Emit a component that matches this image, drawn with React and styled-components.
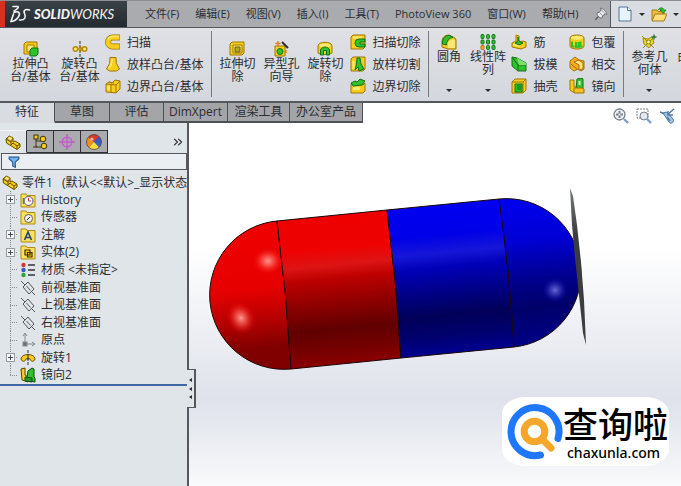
import React from 'react';
import styled, { createGlobalStyle } from 'styled-components';
import { ChevronsRight } from 'lucide-react';

const GlobalStyle = createGlobalStyle`
  * {
    box-sizing: border-box;
  }
  body {
    margin: 0;
    font-family: 'Open Sans', 'Noto Sans CJK SC', sans-serif;
    font-size: 12px;
    color: #2b2d31;
  }
  button, input {
    font: inherit;
    color: inherit;
    padding: 0;
    border: 0;
    background: none;
  }
`;

const gold = '#f7cd1c';
const lightGold = '#fde874';
const darkGold = '#a27605';
const green = '#2fc22a';
const darkGreen = '#14701a';

const icons = {
  extrude: (
    <g strokeWidth="1">
      <path d="M1 3l2-2h11v10l-2 2H1z" fill={gold} stroke={darkGold} />
      <path d="M4 4h7v7H4z" fill={lightGold} stroke={darkGold} />
      <path d="M7 9l2-2h6v6l-2 2H7z" fill={green} stroke={darkGreen} />
    </g>
  ),
  revolve: (
    <g fill="none" strokeWidth="1.5">
      <path d="M8 0v3M8 4v3M8 9v3M8 13v3" stroke="#333" strokeWidth="1" />
      <circle cx="3.5" cy="8" r="2.3" fill={lightGold} stroke="#b98a08" />
      <circle cx="12.5" cy="8" r="2.3" fill={lightGold} stroke="#b98a08" />
      <path d="M5 8h6M8 5.5L10.5 8 8 10.500" stroke="#b98a08" />
    </g>
  ),
  sweep: (
    <g fill="none">
      <path d="M15 3.500H7.500a4.500 4.500 0 0 0 0 9H15" stroke={darkGold} strokeWidth="6" />
      <path d="M14.500 3.500H7.500a4.500 4.500 0 0 0 0 9h7" stroke={gold} strokeWidth="4.600" />
      <path d="M14 2.500H7a5 5 0 0 0-4 3" stroke={lightGold} strokeWidth="1.300" />
    </g>
  ),
  loft: (
    <g>
      <path d="M5 1.500h6l.5 6 3 5.500-3 2h-7l-3-2 3-5.500z" fill={gold} stroke={darkGold} />
      <path d="M6 3h2l-1 6-3 4-1-.5L5.500 8z" fill={lightGold} />
    </g>
  ),
  boundary: (
    <g stroke={darkGold}>
      <path d="M1 6l3-2 3 1 3-3 5 1v8l-4 4-10-1z" fill={gold} />
      <path d="M1 6l10 1 4-4M11 7v8M6 6.500V14M4 4l5 1" fill="none" />
      <path d="M2.500 8h2v4h-2z" fill={lightGold} stroke="none" />
    </g>
  ),
  extrudeCut: (
    <g stroke={darkGold}>
      <path d="M1 3l2-2h12v11l-2 2H1z" fill={gold} />
      <path d="M4 4h9v8H4z" fill={lightGold} />
      <path d="M6 6h5v5H6z" fill="#b8a51e" stroke="#6a6208" />
    </g>
  ),
  holeWizard: (
    <g>
      <path d="M2 5h10v10H2z" fill={gold} stroke={darkGold} />
      <circle cx="7" cy="10.500" r="3" fill={green} stroke={darkGreen} />
      <path d="M9 1l6 6" stroke="#2e2e2e" strokeWidth="2" />
      <path d="M5 0v5M2.500 2.500h5M13 9v3" stroke="#e27b18" strokeWidth="1.300" />
    </g>
  ),
  revolveCut: (
    <g>
      <path d="M1 5c0-5 14-5 14 0v7c-2 2-12 2-14 0z" fill={gold} stroke={darkGold} />
      <ellipse cx="8" cy="4.500" rx="5.500" ry="2" fill={lightGold} />
      <path d="M3.500 14V9c1-4 8-4 9 0v5H9.500V9.500h-3V14z" fill={green} stroke={darkGreen} />
    </g>
  ),
  sweepCut: (
    <g>
      <path d="M1 3l2-2h12v12l-2 2H1z" fill={gold} stroke={darkGold} />
      <path d="M3 3.500h9" stroke={lightGold} strokeWidth="2" />
      <path d="M15 5H9a3.500 3.500 0 0 0 0 8h6v-3H10V8h5z" fill={green} stroke={darkGreen} />
    </g>
  ),
  loftCut: (
    <g>
      <path d="M1 3l2-2h12v12l-2 2H1z" fill={gold} stroke={darkGold} />
      <path d="M2.500 5h2v8h-2z" fill={lightGold} />
      <path d="M7 2h3l1 6 3 5-5 2-1-4-3 3 1.500-6z" fill={green} stroke={darkGreen} />
    </g>
  ),
  boundaryCut: (
    <g>
      <path d="M1 6l12 1 2-2v8l-2 2H1z" fill={gold} stroke={darkGold} />
      <path d="M3 9h7v3H3z" fill={lightGold} />
      <path d="M1 5l4-2 2 1 3-3 5 2-3 4-9 1z" fill={green} stroke={darkGreen} />
    </g>
  ),
  fillet: (
    <g>
      <path d="M1 8c0-5 3-7 7-7l6 3 1 2v9H7L1 13z" fill={gold} stroke={darkGold} />
      <path d="M1.500 10C1 5 4 1 9 1.500l3 2C8 4 5.500 7 5.500 11z" fill={green} stroke={darkGreen} />
      <path d="M7 14V9.500C7.500 7 9 5.500 12 5.500l2 .5v8z" fill={lightGold} />
    </g>
  ),
  linearPattern: (
    <g fill={green} stroke={darkGreen}>
      {[2.5, 8, 13.5].map((x) => [2.5, 8, 13.5].map((y) => (
        <rect
          key={`${x}-${y}`}
          x={x - 1.5}
          y={y - 2}
          width="3"
          height="4"
          rx="1"
          fill={x === 2.5 && y === 13.5 ? '#f5b01c' : green}
          stroke={x === 2.5 && y === 13.5 ? '#b06a08' : darkGreen}
        />
      )))}
    </g>
  ),
  rib: (
    <g>
      <path d="M1 9l4-2V1l3 1v6l4-1 3 1v5l-5 2-9-2z" fill={gold} stroke={darkGold} />
      <path d="M7 3c0 4 2 5 5 6l-4 2-4-2 3-2z" fill={green} stroke={darkGreen} />
      <path d="M2 10.500l7 2" stroke={lightGold} strokeWidth="1.500" />
    </g>
  ),
  draft: (
    <g>
      <path d="M1 1l5 1 9 5v8H7L1 10z" fill={green} stroke={darkGreen} />
      <path d="M1 1l6 8h8M7 9v6" fill="none" stroke={darkGreen} />
      <path d="M6 2l9 5v2H8z" fill="#7fe070" />
    </g>
  ),
  shell: (
    <g>
      <path d="M1 4l3-3h11v11l-3 3H1z" fill={gold} stroke={darkGold} />
      <path d="M1 4h11v11M12 4l3-3" fill="none" stroke={darkGold} />
      <path d="M4 6h7v8H4z" fill={green} stroke={darkGreen} />
      <path d="M6 7h4v5H6z" fill="#169c1b" />
    </g>
  ),
  wrap: (
    <g>
      <path d="M1 4c0-4 14-4 14 0v8c0 4-14 4-14 0z" fill={gold} stroke={darkGold} />
      <ellipse cx="8" cy="3.700" rx="6" ry="2" fill={lightGold} />
      <path d="M3 7.500v5h2.500M7 8v5h2.500V8M11.500 7.500v5h2" fill="none" stroke={green} strokeWidth="2" />
    </g>
  ),
  intersect: (
    <g>
      <path d="M1 5l5-4 4 3 5 1v8l-3 2-3-2-4 2-4-3z" fill="#f4ad22" stroke={darkGold} />
      <path d="M5 6l5-2 4 3v6l-4 1V9z" fill={lightGold} stroke="#b96312" />
      <path d="M2 8l6 5" stroke="#b96312" />
    </g>
  ),
  mirror: (
    <g>
      <path d="M1 2h4v7h4v5H4l-3-2z" fill={gold} stroke={darkGold} />
      <path d="M8 1l5-1 1 1v10l-2 1-5-1z" fill={green} stroke={darkGreen} />
      <path d="M9.500 3h2v4h-2z" fill="#dff5b8" />
      <path d="M5 10h8l2 1v4H5z" fill="#f4c022" stroke={darkGold} />
    </g>
  ),
  refGeometry: (
    <g>
      <path d="M2 4l5 1 4-2 2 6-3 2-2 3-5-4z" fill="#e9dc2d" stroke="#a38b10" />
      <path d="M1 2l12 12M14 2L2 14" stroke="#94891c" />
      <circle cx="7.500" cy="8" r="2" fill="#f4fa90" stroke="#91810e" />
      <path d="M13 .5v5M10.500 3h5" stroke="#2f7a3a" strokeWidth="1.500" />
    </g>
  ),
  curve: (
    <g>
      <path d="M4 14C6 2 12 14 15 2" fill="none" stroke="#4b6ea8" strokeWidth="2" />
    </g>
  ),
  page: (
    <g>
      <path d="M2 1h8.500L14 4.500V15H2z" fill="#e8f3fc" stroke="#53749c" />
      <path d="M10.500 1v3.500H14" fill="#fff" stroke="#53749c" />
    </g>
  ),
  open: (
    <g>
      <path d="M1 4h5l1 1.500h6V14H1z" fill="#f0bd34" stroke="#a9781a" />
      <path d="M1 15l3-7h12l-3 7z" fill="#fbe07a" stroke="#a9781a" />
      <path d="M7 4c2-3 5-3 6 0h2l-3 3.500L9 4h2" fill={green} stroke={darkGreen} strokeWidth=".7" />
    </g>
  ),
  pin: (
    <g fill="#e9ebee" stroke="#5b5e63">
      <path d="M1.500 14.500l5-5" strokeWidth="1.600" />
      <path d="M3.500 7c-1 2 3.500 6.500 5.500 5.500l1-2.500 3-2 1.500.5c1-2-5-8-7-7L8 3.500 6 6z" />
      <path d="M6 6l4 4M8 3l5 5" fill="none" stroke="#85888c" />
    </g>
  ),
  part: (
    <g stroke="#6b4f00">
      <path d="M1 5l3-3 4 2v4l2-1 5 3v3l-3 2.500L1.500 9z" fill={gold} />
      <path d="M1 5l5 3v3M8 4L6 8M15 10l-3 2v3.500M6 11l2-2 4 3" fill="none" />
      <path d="M4 2l4 2-2 3-4-2z" fill={lightGold} strokeWidth=".6" />
    </g>
  ),
  config: (
    <g stroke="#3e3306">
      <path d="M4 4v9h5M4 7h5" fill="none" />
      <rect x="2" y="1" width="4" height="4" fill={gold} />
      <circle cx="11" cy="5" r="2.800" fill={gold} />
      <circle cx="12" cy="12" r="2.800" fill={gold} />
      <path d="M1 13h4" />
    </g>
  ),
  dimx: (
    <g fill="none" stroke="#c55ccd" strokeWidth="1.400">
      <circle cx="8" cy="8" r="4.800" />
      <path d="M8 0v16M0 8h16" />
    </g>
  ),
  display: (
    <g>
      <circle cx="8" cy="8" r="7.500" fill="#3569c9" />
      <path d="M8 8L2 3.500A7.500 7.500 0 0 1 13 2.500z" fill="#d53a26" />
      <path d="M8 8L2 3.500a7.500 7.500 0 0 0 1 10z" fill="#ef8f22" />
      <path d="M8 8l-5 5.500a7.500 7.500 0 0 0 10 0z" fill="#f6dc3a" />
      <path d="M8 8l5-5.500a7.500 7.500 0 0 1 2 7z" fill="#3c56c2" />
      <circle cx="6" cy="5" r="1.600" fill="#fff" opacity=".6" />
      <circle cx="8" cy="8" r="7.500" fill="none" stroke="#56422e" strokeWidth=".7" />
    </g>
  ),
  filter: (
    <path d="M2.500 2.500h11v2L9.500 8v6l-3-1.500V8l-4-3.500z" fill="#77b5ec" stroke="#1f5b9e" strokeWidth="1.300" />
  ),
  history: (
    <g>
      <path d="M1 2h5l1 1.500h8V15H1z" fill="#fbe25c" stroke="#b08a14" />
      <circle cx="8.500" cy="9" r="4.500" fill="#fff" stroke="#5c4a7c" />
      <path d="M8.500 6v3h2.500" fill="none" stroke="#b03a48" />
      <path d="M3.500 6v6" stroke="#2f9a45" strokeWidth="1.500" />
    </g>
  ),
  sensor: (
    <g>
      <path d="M1 2h5l1 1.500h8V15H1z" fill="#fbe25c" stroke="#b08a14" />
      <circle cx="8.500" cy="9.500" r="4" fill="#f5f5ee" stroke="#5b5d60" />
      <path d="M7 11l3-3" stroke="#222" />
    </g>
  ),
  note: (
    <g>
      <path d="M1 2h5l1 1.500h8V15H1z" fill="#fbe25c" stroke="#b08a14" />
      <path d="M4.500 13l3.500-8 3.500 8M6 10.500h4" fill="none" stroke="#2a3f77" strokeWidth="1.600" />
    </g>
  ),
  solid: (
    <g>
      <path d="M1 2h5l1 1.500h8V15H1z" fill="#fbe25c" stroke="#b08a14" />
      <path d="M5 6h5v5H5zM7.500 8.500h4.500V13H7.500z" fill={gold} stroke="#3b3004" strokeWidth="1.200" />
    </g>
  ),
  material: (
    <g>
      <circle cx="3.500" cy="3" r="2.200" fill="#d9342b" />
      <circle cx="3.500" cy="8" r="2.200" fill="#3558c4" />
      <circle cx="3.500" cy="13" r="2.200" fill="#2da53a" />
      <path d="M8 3h7M8 8h7M8 13h7" stroke="#333" strokeWidth="1.500" />
    </g>
  ),
  plane: (
    <g fill="none" stroke="#4f5458">
      <path d="M3 7l5-5 6 7-5 5z" />
      <path d="M1 1l4 4M12 12l3 3M6.500 6l4 4.500" />
    </g>
  ),
  origin: (
    <g fill="none" stroke="#888c90">
      <path d="M5 12V2M3 4l2-3 2 3M5 12h9M12 10l3 2-3 2" />
      <rect x="3" y="10" width="4" height="4" fill="#6d7073" />
    </g>
  ),
  revolveBoss: (
    <g>
      <path d="M8 0v16" stroke="#333" strokeDasharray="3 1" />
      <path d="M1 9c0-6 14-6 14 0-1 3-4 3-5 0-1-1-3-1-4 0-1 3-4 3-5 0z" fill={gold} stroke="#6b4f00" />
      <path d="M8 4v6" stroke="#333" />
    </g>
  ),
  mirrorBoss: (
    <g>
      <path d="M1 2l4-1v7l3 2v5l-6-2z" fill={gold} stroke="#5b4400" />
      <path d="M8 4l4-3 2 1v8l1 1v4l-6-1-2-4z" fill={green} stroke="#0d4a10" />
      <path d="M5 10l7 1v4l-7-1z" fill="#1f9e25" stroke="#0d4a10" />
    </g>
  ),
  zoomFit: (
    <g fill="none" stroke="#777f88">
      <circle cx="6.500" cy="6.500" r="5.500" fill="#eef2f5" strokeWidth="1.300" />
      <path d="M6.500 3v7M3 6.500h7" strokeDasharray="2.500 2" strokeWidth="2" />
      <path d="M11 11l4 4" stroke="#7d9fc2" strokeWidth="2.400" />
    </g>
  ),
  zoomArea: (
    <g fill="none" stroke="#777f88">
      <path d="M1 1h11v9H1z" strokeDasharray="2 1" />
      <circle cx="8" cy="8" r="4" fill="#e3e9ee" />
      <path d="M11 11l4 4" stroke="#7d9fc2" strokeWidth="2.400" />
    </g>
  ),
  prevView: (
    <g fill="none" stroke="#54789e">
      <path d="M1 4l5 2M15 1L8 7" strokeWidth="1.500" />
      <path d="M4 5l4-1 6 7c2 3-2 6-4 3z" fill="#9cc3e6" />
      <path d="M9 3v4h5M8 9l3 4" strokeWidth="1.300" />
    </g>
  ),
};

const IconSvg = styled.svg`
  display: block;
  flex: none;
  width: ${(props) => props.$size}px;
  height: ${(props) => props.$size}px;
`;

const Icon = ({ name, size = 16 }) => (
  <IconSvg viewBox="0 0 16 16" $size={size} aria-hidden="true">
    {icons[name]}
  </IconSvg>
);

const Window = styled.div`
  min-height: 100vh;
  display: flex;
  flex-direction: column;
  overflow: hidden;
  background: #d9dce1;
`;

const MenuBar = styled.header`
  display: flex;
  height: 28px;
  border-top: 1px solid #8d8f92;
  border-bottom: 1px solid #55585c;
  background: #a9abae;
`;

const Brand = styled.div`
  flex: none;
  display: flex;
  align-items: center;
  gap: 3px;
  width: 127px;
  padding-left: 4px;
  border-left: 5px solid #d8301f;
  background: linear-gradient(#3a4248, #232a30);
  color: #f4f5f6;
  font-family: 'Lato', 'Open Sans', sans-serif;
  font-size: 13px;
  font-style: italic;
`;

const BrandStrong = styled.b`
  font-weight: 900;
`;

const BrandMark = styled.svg`
  width: 22px;
  height: 18px;
`;

const Menu = styled.nav`
  flex: 1;
  display: flex;
  align-items: center;
  gap: 16px;
  min-width: 0;
  padding-left: 18px;
  font-size: 11px;
`;

const MenuItem = styled.button`
  flex: none;
  line-height: 16px;
  white-space: nowrap;
`;

const QuickTools = styled.div`
  flex: none;
  display: flex;
  align-items: center;
  gap: 6px;
  width: 71px;
  padding-left: 6px;
  overflow: hidden;
  border-left: 1px solid #55585c;
  background: #d9dce1;
`;

const IconButton = styled.button`
  flex: none;
  display: flex;
  align-items: center;
  gap: 6px;
`;

const Caret = styled.span`
  width: 0;
  height: 0;
  border: 3px solid transparent;
  border-top-color: #2b2d31;
  border-bottom: 0;
`;

const Ribbon = styled.section`
  display: flex;
  height: 75px;
  padding: 3px 0 4px;
  overflow: hidden;
  border-bottom: 2px solid #55585c;
  background: linear-gradient(#dfe1e5, #d4d7dd);
`;

const RibbonGroup = styled.div`
  flex: none;
  display: flex;
  padding-left: ${(props) => props.$start}px;
  padding-right: 8px;
  border-right: 1px solid #777a7e;
`;

const BigButton = styled.button`
  flex: none;
  display: flex;
  flex-direction: column;
  align-items: center;
  width: ${(props) => props.$width}px;
  padding-top: ${(props) => (props.$menu ? 3 : 10)}px;
  line-height: 13px;

  ${Caret} {
    margin: auto 0 5px;
  }
`;

const BigLabel = styled.span`
  white-space: pre-line;
  text-align: center;
`;

const CommandList = styled.div`
  flex: none;
  display: flex;
  flex-direction: column;
  margin-left: ${(props) => props.$indent}px;
`;

const Command = styled.button`
  display: flex;
  align-items: center;
  gap: 6px;
  height: 22px;
  white-space: nowrap;
`;

const Workspace = styled.main`
  flex: 1;
  display: grid;
  grid-template-columns: 189px 1fr;
  grid-template-rows: 20px 1fr;
`;

const CommandTabs = styled.div`
  grid-row: 1;
  grid-column: 1 / 3;
  justify-self: start;
  z-index: 1;
  display: flex;
`;

const CommandTab = styled.button`
  width: ${(props) => props.$width}px;
  border: solid #4d5054;
  border-width: 0 1px 2px 0;
  background: #a3a5a8;
  line-height: 16px;
  white-space: nowrap;

  &[aria-selected='true'] {
    border-color: #4d5054 #4d5054 #d9dce1;
    background: #d9dce1;
  }
`;

const Panel = styled.aside`
  grid-row: 2;
  grid-column: 1;
  position: relative;
  z-index: 1;
  padding-top: 7px;
  border-right: 2px solid #55585c;
  background: #e0e5e9;
`;

const PanelTabs = styled.div`
  display: flex;
  align-items: center;
  height: 23px;
  padding-right: 2px;
`;

const PanelTab = styled.button`
  display: flex;
  align-items: center;
  justify-content: center;
  width: 27px;
  height: 23px;
  border: solid #2e3033;
  border-width: 1px 1px 1px 0;
  background: #a9abae;

  &[aria-selected='true'] {
    border-color: #f4f5f6 #2e3033 #e0e5e9;
    background: #e0e5e9;
  }
`;

const MoreButton = styled.button`
  display: flex;
  margin-left: auto;
`;

const FilterBox = styled.label`
  display: flex;
  align-items: center;
  height: 17px;
  margin: 0 0 0 1px;
  padding-left: 5px;
  border: 1px solid #55585c;
  background: #eceff1;
`;

const FilterInput = styled.input`
  flex: 1;
  min-width: 0;
  outline: none;
`;

const Tree = styled.div`
  padding-top: 3px;
  border-bottom: 2px solid #4267a8;
  white-space: nowrap;
`;

const TreeRoot = styled.div`
  display: flex;
  align-items: center;
  gap: 4px;
  height: 18px;
  padding-left: 2px;
  overflow: hidden;
`;

const RootState = styled.span`
  padding-left: 5px;
`;

const TreeList = styled.ul`
  display: flex;
  flex-direction: column;
  height: 193px;
  margin: 0 0 0 2px;
  padding: 0;
  list-style: none;
`;

const TreeItem = styled.li`
  flex: 1;
  display: grid;
  grid-template-columns: 16px 16px 1fr;
  align-items: center;
  column-gap: 2px;
  min-height: 0;
  line-height: 16px;
`;

const TreeLabel = styled.span`
  padding-left: 3px;
`;

const Branch = styled.span`
  align-self: stretch;
  display: grid;
  place-items: center;
  background:
    repeating-linear-gradient(#8a8e92 0 1px, transparent 1px 2px) 8px 0 / 1px ${(props) => (props.$last ? '50%' : '100%')} no-repeat,
    repeating-linear-gradient(90deg, #8a8e92 0 1px, transparent 1px 2px) 8px 50% / 8px 1px no-repeat;
`;

const Expander = styled.button`
  width: 9px;
  height: 9px;
  border: 1px solid #969b9f;
  background:
    linear-gradient(#4a4d52, #4a4d52) center / 5px 1px no-repeat,
    linear-gradient(#4a4d52, #4a4d52) center / 1px 5px no-repeat,
    #f2f4f5;
`;

const Splitter = styled.button`
  position: absolute;
  top: 246px;
  left: 187px;
  display: flex;
  flex-direction: column;
  align-items: center;
  justify-content: space-evenly;
  width: 9px;
  height: 39px;
  padding: 3px 0;
  border: solid #55585c;
  border-width: 1px 2px 1px 0;
  background: #e0e5e9;
`;

const LeftCaret = styled.span`
  border: 2px solid transparent;
  border-right: 3px solid #2b2d31;
  border-left: 0;
`;

const Viewport = styled.section`
  grid-row: 1 / 3;
  grid-column: 2;
  position: relative;
  min-width: 0;
  background: linear-gradient(#fff 38%, #dfe2eb 77%, #e4e7ee 83%, #f9fafb 100%);
`;

const Model = styled.svg`
  display: block;
  width: 100%;
  height: 100%;
`;

const ViewTools = styled.div`
  position: absolute;
  top: 5px;
  right: 6px;
  display: flex;
  gap: 7px;
`;

const Watermark = styled.a`
  position: absolute;
  right: 12px;
  bottom: 20px;
  display: flex;
  align-items: center;
  width: 167px;
  height: 69px;
  padding-left: 5px;
  border-radius: 24px / 16px;
  background: #fff;
  color: #000;
  text-decoration: none;
`;

const WatermarkLogo = styled.svg`
  flex: none;
  width: 56px;
  height: 56px;
`;

const WatermarkText = styled.span`
  display: flex;
  flex-direction: column;
  white-space: nowrap;
`;

const WatermarkName = styled.span`
  font-size: 35px;
  font-weight: 500;
  line-height: 42px;
`;

const WatermarkHost = styled.span`
  padding-left: 4px;
  font-family: 'Noto Sans', sans-serif;
  font-size: 14px;
  font-weight: 500;
  line-height: 14px;
`;

const menus = ['文件(F)', '编辑(E)', '视图(V)', '插入(I)', '工具(T)', 'PhotoView 360', '窗口(W)', '帮助(H)'];

const groups = [
  {
    start: 6,
    width: 49,
    big: [['extrude', '拉伸凸\n台/基体'], ['revolve', '旋转凸\n台/基体']],
    lists: [[1, [['sweep', '扫描'], ['loft', '放样凸台/基体'], ['boundary', '边界凸台/基体']]]],
  },
  {
    start: 3,
    width: 44,
    big: [['extrudeCut', '拉伸切\n除'], ['holeWizard', '异型孔\n向导'], ['revolveCut', '旋转切\n除']],
    lists: [[3, [['sweepCut', '扫描切除'], ['loftCut', '放样切割'], ['boundaryCut', '边界切除']]]],
  },
  {
    start: 0,
    width: 39,
    menu: true,
    big: [['fillet', '圆角'], ['linearPattern', '线性阵\n列']],
    lists: [
      [4, [['rib', '筋'], ['draft', '拔模'], ['shell', '抽壳']]],
      [12, [['wrap', '包覆'], ['intersect', '相交'], ['mirror', '镜向']]],
    ],
  },
  {
    start: 5,
    width: 40,
    menu: true,
    big: [['refGeometry', '参考几\n何体'], ['curve', '曲线']],
    lists: [],
  },
];

const commandTabs = [
  ['特征', 55],
  ['草图', 55],
  ['评估', 54],
  ['DimXpert', 64],
  ['渲染工具', 62],
  ['办公室产品', 73],
];

const panelTabs = [
  ['part', '设计树'],
  ['config', '配置'],
  ['dimx', 'DimXpert'],
  ['display', '外观'],
];

const features = [
  ['history', 'History', true],
  ['sensor', '传感器'],
  ['note', '注解', true],
  ['solid', '实体(2)', true],
  ['material', '材质 <未指定>'],
  ['plane', '前视基准面'],
  ['plane', '上视基准面'],
  ['plane', '右视基准面'],
  ['origin', '原点'],
  ['revolveBoss', '旋转1', true],
  ['mirrorBoss', '镜向2'],
];

// the shading runs across the capsule axis, so each gradient follows its own seam
const shades = [
  ['redBody', 277, 221, 291, 369, [[0, '#ee0000'], [0.22, '#ee0202'], [0.33, '#dd1414'], [0.42, '#bd0000'], [0.76, '#600000'], [0.9, '#760000'], [1, '#8a0000']]],
  ['redCap', 262, 221, 278, 369, [[0, '#f00000'], [0.45, '#e60000'], [0.65, '#b80000'], [0.85, '#800000'], [1, '#800000']]],
  ['blueBody', 387, 210, 401, 358, [[0, '#0000f0'], [0.2, '#0000e8'], [0.32, '#1616d8'], [0.42, '#0000b8'], [0.74, '#000058'], [0.88, '#00006e'], [1, '#000090']]],
  ['blueCap', 499, 199, 514, 347, [[0, '#0000f0'], [0.3, '#0000d4'], [0.55, '#000090'], [0.75, '#00006a'], [1, '#000088']]],
];

const Capsule = () => (
  <Model viewBox="189 103 492 383" role="img" aria-label="零件1">
    <defs>
      {shades.map(([id, x1, y1, x2, y2, stops]) => (
        <linearGradient key={id} id={id} gradientUnits="userSpaceOnUse" x1={x1} y1={y1} x2={x2} y2={y2}>
          {stops.map(([offset, color]) => (
            <stop key={offset} offset={offset} stopColor={color} />
          ))}
        </linearGradient>
      ))}
      <radialGradient id="redShine">
        <stop offset="0" stopColor="#ff9a90" />
        <stop offset="0.4" stopColor="#ff6a60" stopOpacity="0.6" />
        <stop offset="1" stopColor="#f00000" stopOpacity="0" />
      </radialGradient>
      <radialGradient id="blueShine">
        <stop offset="0" stopColor="#6a68d8" />
        <stop offset="0.4" stopColor="#4a48c8" stopOpacity="0.6" />
        <stop offset="1" stopColor="#0000a0" stopOpacity="0" />
      </radialGradient>
      <linearGradient id="blade" x1="0" y1="0" x2="0" y2="1">
        <stop offset="0" stopColor="#77797b" />
        <stop offset="0.3" stopColor="#3a3c3d" />
        <stop offset="1" stopColor="#3a3c3d" />
      </linearGradient>
    </defs>
    <g stroke="#1a0508" strokeWidth="1">
      <path d="M277 221A74 74 0 0 0 291 369Q287 295 277 221Z" fill="url(#redCap)" />
      <path d="M277 221L387 210Q397 284 401 358L291 369Q287 295 277 221Z" fill="url(#redBody)" />
      <path d="M387 210L499 199Q510 273 514 347L401 358Q397 284 387 210Z" fill="url(#blueBody)" />
      <path d="M499 199A74 74 0 0 1 514 347Q510 273 499 199Z" fill="url(#blueCap)" />
    </g>
    <path d="M570 188L573 196L577 225L581 262L584 300L586 345L583 333L579 295L575 258L572 225Z" fill="url(#blade)" />
    <ellipse cx="268" cy="261" rx="16" ry="14" fill="url(#redShine)" />
    <ellipse cx="241" cy="318" rx="14" ry="17" fill="url(#redShine)" transform="rotate(-25 241 318)" />
    <circle cx="555" cy="290" r="13" fill="url(#blueShine)" />
  </Model>
);

const App = () => (
  <>
    <GlobalStyle />
    <Window>
      <MenuBar>
        <Brand>
          <BrandMark viewBox="0 0 22 18" fill="none" stroke="#f4f5f6" strokeWidth="1.600" strokeLinecap="round">
            <path d="M4 1.500h5c1 1-1 3-4 4.500M5 7.500c5-2 7 1 4 5-2 2.500-4 4-7 4L4.500 9" />
            <path d="M20.500 5c-4-1.500-6.500.5-5 3.500s1 7-5 6.500" />
          </BrandMark>
          <span><BrandStrong>SOLID</BrandStrong>WORKS</span>
        </Brand>
        <Menu>
          {menus.map((label) => (
            <MenuItem key={label}>{label}</MenuItem>
          ))}
          <IconButton aria-label="固定菜单"><Icon name="pin" size={14} /></IconButton>
        </Menu>
        <QuickTools>
          <IconButton aria-label="新建"><Icon name="page" /><Caret /></IconButton>
          <IconButton aria-label="打开"><Icon name="open" /><Caret /></IconButton>
        </QuickTools>
      </MenuBar>

      <Ribbon>
        {groups.map(({ start, width, menu, big, lists }) => (
          <RibbonGroup key={big[0][0]} $start={start}>
            {big.map(([icon, label]) => (
              <BigButton key={icon} $width={width} $menu={menu}>
                <Icon name={icon} />
                <BigLabel>{label}</BigLabel>
                {menu && <Caret />}
              </BigButton>
            ))}
            {lists.map(([indent, commands]) => (
              <CommandList key={indent} $indent={indent}>
                {commands.map(([icon, label]) => (
                  <Command key={icon}>
                    <Icon name={icon} />
                    {label}
                  </Command>
                ))}
              </CommandList>
            ))}
          </RibbonGroup>
        ))}
      </Ribbon>

      <Workspace>
        <CommandTabs role="tablist">
          {commandTabs.map(([label, width], index) => (
            <CommandTab key={label} role="tab" aria-selected={index === 0} $width={width}>
              {label}
            </CommandTab>
          ))}
        </CommandTabs>

        <Panel>
          <PanelTabs role="tablist">
            {panelTabs.map(([icon, label], index) => (
              <PanelTab key={icon} role="tab" aria-label={label} aria-selected={index === 0}>
                <Icon name={icon} />
              </PanelTab>
            ))}
            <MoreButton aria-label="更多"><ChevronsRight size={14} /></MoreButton>
          </PanelTabs>
          <FilterBox>
            <Icon name="filter" size={14} />
            <FilterInput aria-label="过滤器" />
          </FilterBox>
          <Tree>
            <TreeRoot>
              <Icon name="part" />
              <span>零件1</span>
              <RootState>(默认&lt;&lt;默认&gt;_显示状态</RootState>
            </TreeRoot>
            <TreeList>
              {features.map(([icon, label, expandable], index) => (
                <TreeItem key={label}>
                  <Branch $last={index === features.length - 1}>
                    {expandable && <Expander aria-label={`展开 ${label}`} />}
                  </Branch>
                  <Icon name={icon} />
                  <TreeLabel>{label}</TreeLabel>
                </TreeItem>
              ))}
            </TreeList>
          </Tree>
          <Splitter aria-label="折叠面板">
            <LeftCaret />
            <LeftCaret />
            <LeftCaret />
          </Splitter>
        </Panel>

        <Viewport>
          <Capsule />
          <ViewTools>
            <IconButton aria-label="整屏显示全图"><Icon name="zoomFit" /></IconButton>
            <IconButton aria-label="局部放大"><Icon name="zoomArea" /></IconButton>
            <IconButton aria-label="上一视图"><Icon name="prevView" /></IconButton>
          </ViewTools>
          <Watermark href="#">
            <WatermarkLogo viewBox="0 0 56 56" fill="none" strokeLinecap="round">
              <path d="M51 34.500A24 24 0 1 0 33.500 51" stroke="#1f78fb" strokeWidth="7" />
              <circle cx="27.500" cy="27.500" r="10.300" stroke="#f6a72b" strokeWidth="7" />
              <path d="M36 36l8 8" stroke="#f6a72b" strokeWidth="7" />
            </WatermarkLogo>
            <WatermarkText>
              <WatermarkName>查询啦</WatermarkName>
              <WatermarkHost>chaxunla.com</WatermarkHost>
            </WatermarkText>
          </Watermark>
        </Viewport>
      </Workspace>
    </Window>
  </>
);

export default App;
